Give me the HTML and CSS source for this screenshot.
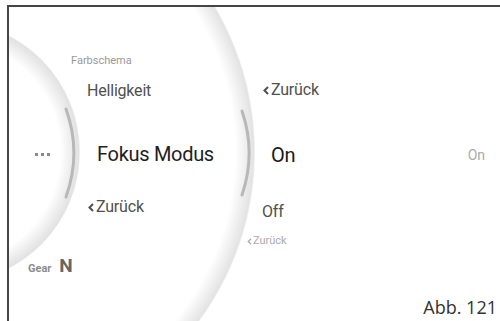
FILE: index.html
```html
<!DOCTYPE html>
<html lang="de">
<head>
    <meta charset="UTF-8">
    <meta name="viewport" content="width=device-width, initial-scale=1.0">
    <title>Fokus Modus - Menü</title>
    <link rel="stylesheet" href="styles.css">
</head>
<body>
    <div class="frame">
        <svg class="backdrop" width="491" height="314" viewBox="0 0 491 314">
            <defs>
                <radialGradient id="shade-outer" gradientUnits="userSpaceOnUse" cx="-39" cy="145" r="285">
                    <stop offset="0.93" stop-color="#ffffff"/>
                    <stop offset="0.995" stop-color="#e3e3e3"/>
                    <stop offset="1" stop-color="#f4f4f4"/>
                </radialGradient>
                <radialGradient id="shade-inner" gradientUnits="userSpaceOnUse" cx="-60" cy="145" r="131">
                    <stop offset="0.85" stop-color="#ffffff"/>
                    <stop offset="0.99" stop-color="#e2e2e2"/>
                    <stop offset="1" stop-color="#f2f2f2"/>
                </radialGradient>
            </defs>
            <circle cx="-39" cy="145" r="285" fill="url(#shade-outer)"/>
            <circle cx="-60" cy="145" r="131" fill="url(#shade-inner)"/>
            <!-- scroll indicators -->
            <path d="M57 102 A130 130 0 0 1 57 190" fill="none" stroke="#b8b8b8" stroke-width="3" stroke-linecap="round"/>
            <path d="M233 104 A130 130 0 0 1 233 188" fill="none" stroke="#b8b8b8" stroke-width="3" stroke-linecap="round"/>
        </svg>

        <div class="menu">
            <div class="col col-prev">
                <span class="dots"><i></i><i></i><i></i></span>
                <div class="gear"><span class="gear-label">Gear</span><span class="gear-value">N</span></div>
            </div>

            <ul class="col col-main">
                <li class="item item-hint">Farbschema</li>
                <li class="item item-near">Helligkeit</li>
                <li class="item item-active">Fokus Modus</li>
                <li class="item item-back">
                    <svg class="chevron" width="6" height="9" viewBox="0 0 6 9"><polyline points="5,1 1.5,4.5 5,8" fill="none" stroke="currentColor" stroke-width="2"/></svg>Zurück
                </li>
            </ul>

            <ul class="col col-sub">
                <li class="item item-back item-back-top">
                    <svg class="chevron" width="6" height="9" viewBox="0 0 6 9"><polyline points="5,1 1.5,4.5 5,8" fill="none" stroke="currentColor" stroke-width="2"/></svg>Zurück
                </li>
                <li class="item item-on">On</li>
                <li class="item item-off">Off</li>
                <li class="item item-hint item-back-small">
                    <svg class="chevron chevron-small" width="5" height="7" viewBox="0 0 5 7"><polyline points="4,0.8 1.2,3.5 4,6.2" fill="none" stroke="currentColor" stroke-width="1.2"/></svg>Zurück
                </li>
            </ul>

            <div class="col col-end">
                <span class="value">On</span>
            </div>
        </div>

        <p class="caption">Abb. 121</p>
    </div>
</body>
</html>
```

FILE: styles.css
```css
body {
    margin: 0;
    padding: 0;
    background: #ffffff;
    font-family: Roboto, "Noto Sans", sans-serif;
}

.frame {
    position: relative;
    margin: 5px 0 0 7px;
    height: 314px;
    border-top: 2px solid #454545;
    border-left: 2px solid #454545;
    overflow: hidden;
    display: grid;
    grid-template-rows: 1fr auto;
}

.backdrop {
    position: absolute;
    top: 0;
    left: 0;
}

.menu {
    position: relative;
    display: flex;
}

.col {
    margin: 0;
    padding: 0;
    list-style: none;
    display: flex;
    flex-direction: column;
    align-items: flex-start;
}

.item {
    line-height: 20px;
    white-space: nowrap;
    display: flex;
    align-items: center;
    letter-spacing: -0.2px;
}

/* previous level */
.col-prev {
    width: 62px;
}

.dots {
    display: flex;
    gap: 3px;
    margin: 146px 0 0 26px;
}

.dots i {
    width: 3px;
    height: 3px;
    background: #8a8a8a;
}

.gear {
    display: flex;
    align-items: baseline;
    gap: 8px;
    margin: 100px 0 0 19px;
    line-height: 20px;
    font-weight: 700;
    white-space: nowrap;
}

.gear-label {
    font-size: 11px;
    color: #8c8c8c;
}

.gear-value {
    font-size: 19px;
    color: #666666;
    letter-spacing: -1px;
}

/* current level */
.col-main {
    width: 176px;
    padding-top: 44px;
}

.item-hint {
    font-size: 11px;
    color: #9a9a9a;
    letter-spacing: 0;
}

.item-near {
    margin: 10px 0 0 16px;
    font-size: 16px;
    color: #505050;
}

.item-active {
    margin: 43px 0 0 26px;
    font-size: 20px;
    letter-spacing: -0.3px;
    color: #1e1e1e;
}

.item-back {
    margin: 33px 0 0 17px;
    font-size: 16px;
    color: #505050;
}

.chevron {
    margin-right: 2px;
}

/* sub level */
.col-sub {
    flex: 1;
    padding-top: 73px;
}

.item-back-top {
    margin: 0 0 0 16px;
}

.item-on {
    margin: 45px 0 0 24px;
    font-size: 20px;
    color: #1a1a1a;
}

.item-off {
    margin: 37px 0 0 15px;
    font-size: 16px;
    color: #505050;
}

.item-back-small {
    margin: 9px 0 0 0;
    color: #ababab;
}

.chevron-small {
    margin-right: 1px;
}

.col-end {
    padding: 138px 15px 0 0;
}

.value {
    font-size: 14px;
    line-height: 20px;
    color: #ababab;
}

.caption {
    position: relative;
    margin: 0;
    padding: 0 3px 4px 0;
    justify-self: end;
    font-family: "Open Sans", "Noto Sans", sans-serif;
    font-size: 18px;
    line-height: 20px;
    color: #333333;
}
```
